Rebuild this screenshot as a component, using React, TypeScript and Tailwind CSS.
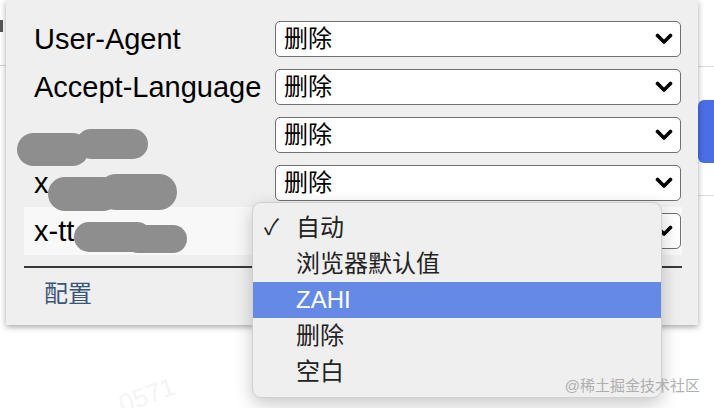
const font = "font-['Liberation_Sans','Noto_Sans_CJK_SC',sans-serif]";

const Chevron = () => (
  <svg width="18" height="12" viewBox="0 0 18 12" className="shrink-0">
    <polyline points="2.5,2.5 9,9 15.5,2.5" fill="none" stroke="#000" strokeWidth="3.6" strokeLinecap="round" strokeLinejoin="round" />
  </svg>
);

const SelectBox = ({ value }: { value: string }) => (
  <div className="flex h-[36px] w-[406px] items-center justify-between rounded-[5px] border-[1.5px] border-[#707070] bg-white pl-[8px] pr-[7px]">
    <span className="text-[24px] leading-none text-black">{value}</span>
    <Chevron />
  </div>
);

const Blob = ({ className }: { className: string }) => (
  <span className={"absolute rounded-full bg-[#8e8e8e] " + className} />
);

const rows = [
  { label: "User-Agent", blobs: null },
  { label: "Accept-Language", blobs: null },
  {
    label: "",
    blobs: (
      <>
        <Blob className="left-[-17px] top-[12px] h-[33px] w-[72px]" />
        <Blob className="left-[42px] top-[8px] h-[30px] w-[72px]" />
      </>
    ),
  },
  {
    label: "x",
    blobs: (
      <>
        <Blob className="left-[14px] top-[8px] h-[34px] w-[72px]" />
        <Blob className="left-[64px] top-[5px] h-[36px] w-[79px]" />
      </>
    ),
  },
];

const menuItems = ["自动", "浏览器默认值", "ZAHI", "删除", "空白"];

export default function App() {
  return (
    <div className={`relative h-[408px] w-[714px] overflow-hidden bg-white ${font}`}>
      <div className="flex items-start">
        {/* page behind, left edge */}
        <div className="flex h-[325px] w-[6px] flex-col">
          <div className="mt-[20px] h-[12px] w-[3px] bg-[#555]" />
          <div className="mt-[33px] h-px w-full bg-[#d6d6d6]" />
        </div>

        {/* popup panel */}
        <div className="relative z-10 flex h-[325px] w-[692px] flex-col bg-[#efefef] pl-[18px] pr-[16px] pt-[15px] shadow-[0_2px_6px_rgba(0,0,0,0.35)]">
          {rows.map((r, i) => (
            <div key={i} className="flex h-[48px] items-center pl-[10px]">
              <div className="relative w-[241px] text-[29px] leading-none text-black">
                {r.label || "\u00a0"}
                {r.blobs}
              </div>
              <SelectBox value="删除" />
            </div>
          ))}
          <div className="flex h-[48px] items-center bg-[#f8f8f8] pl-[10px]">
            <div className="relative w-[241px] text-[29px] leading-none text-black">
              x-tt
              <Blob className="left-[40px] top-[5px] h-[30px] w-[78px]" />
              <Blob className="left-[90px] top-[8px] h-[28px] w-[63px]" />
            </div>
            <SelectBox value="删除" />
          </div>
          <div className="mt-[11px] h-[2px] bg-[#383838]" />
          <div className="mt-[10px] pl-[20px] text-[24px] leading-[32px] text-[#3b5778]">配置</div>
        </div>

        {/* page behind, right edge */}
        <div className="flex h-[325px] w-[16px] flex-col">
          <div className="mt-[66px] h-px w-full bg-[#dcdcdc]" />
          <div className="mt-[33px] h-[63px] w-full rounded-l-[6px] bg-[#4a6ee6]" />
          <div className="mt-[32px] h-px w-full bg-[#dcdcdc]" />
        </div>
      </div>

      {/* open dropdown menu */}
      <div className="absolute left-[252px] top-[202px] z-20 flex h-[196px] w-[410px] flex-col rounded-[9px] border border-[#d0d0d0] bg-[#efefef] py-[7px] shadow-[0_6px_18px_rgba(0,0,0,0.22)]">
        {menuItems.map((m, i) => (
          <div
            key={m}
            className={
              "flex h-[36px] items-center text-[24px] leading-none " +
              (m === "ZAHI" ? "bg-[#648ae6] text-white" : "text-[#222]")
            }
          >
            <span className="w-[43px] shrink-0 pl-[11px] text-[22px]">{i === 0 ? "✓" : ""}</span>
            <span>{m}</span>
          </div>
        ))}
      </div>

      {/* watermark */}
      <div className="absolute left-[118px] top-[382px] rotate-[-20deg] text-[26px] leading-none text-[#f4f4f4]">0571</div>
      <div className="absolute right-[14px] top-[375px] z-30 text-[15px] text-[#a8a8a8] opacity-90">@稀土掘金技术社区</div>
    </div>
  );
}
